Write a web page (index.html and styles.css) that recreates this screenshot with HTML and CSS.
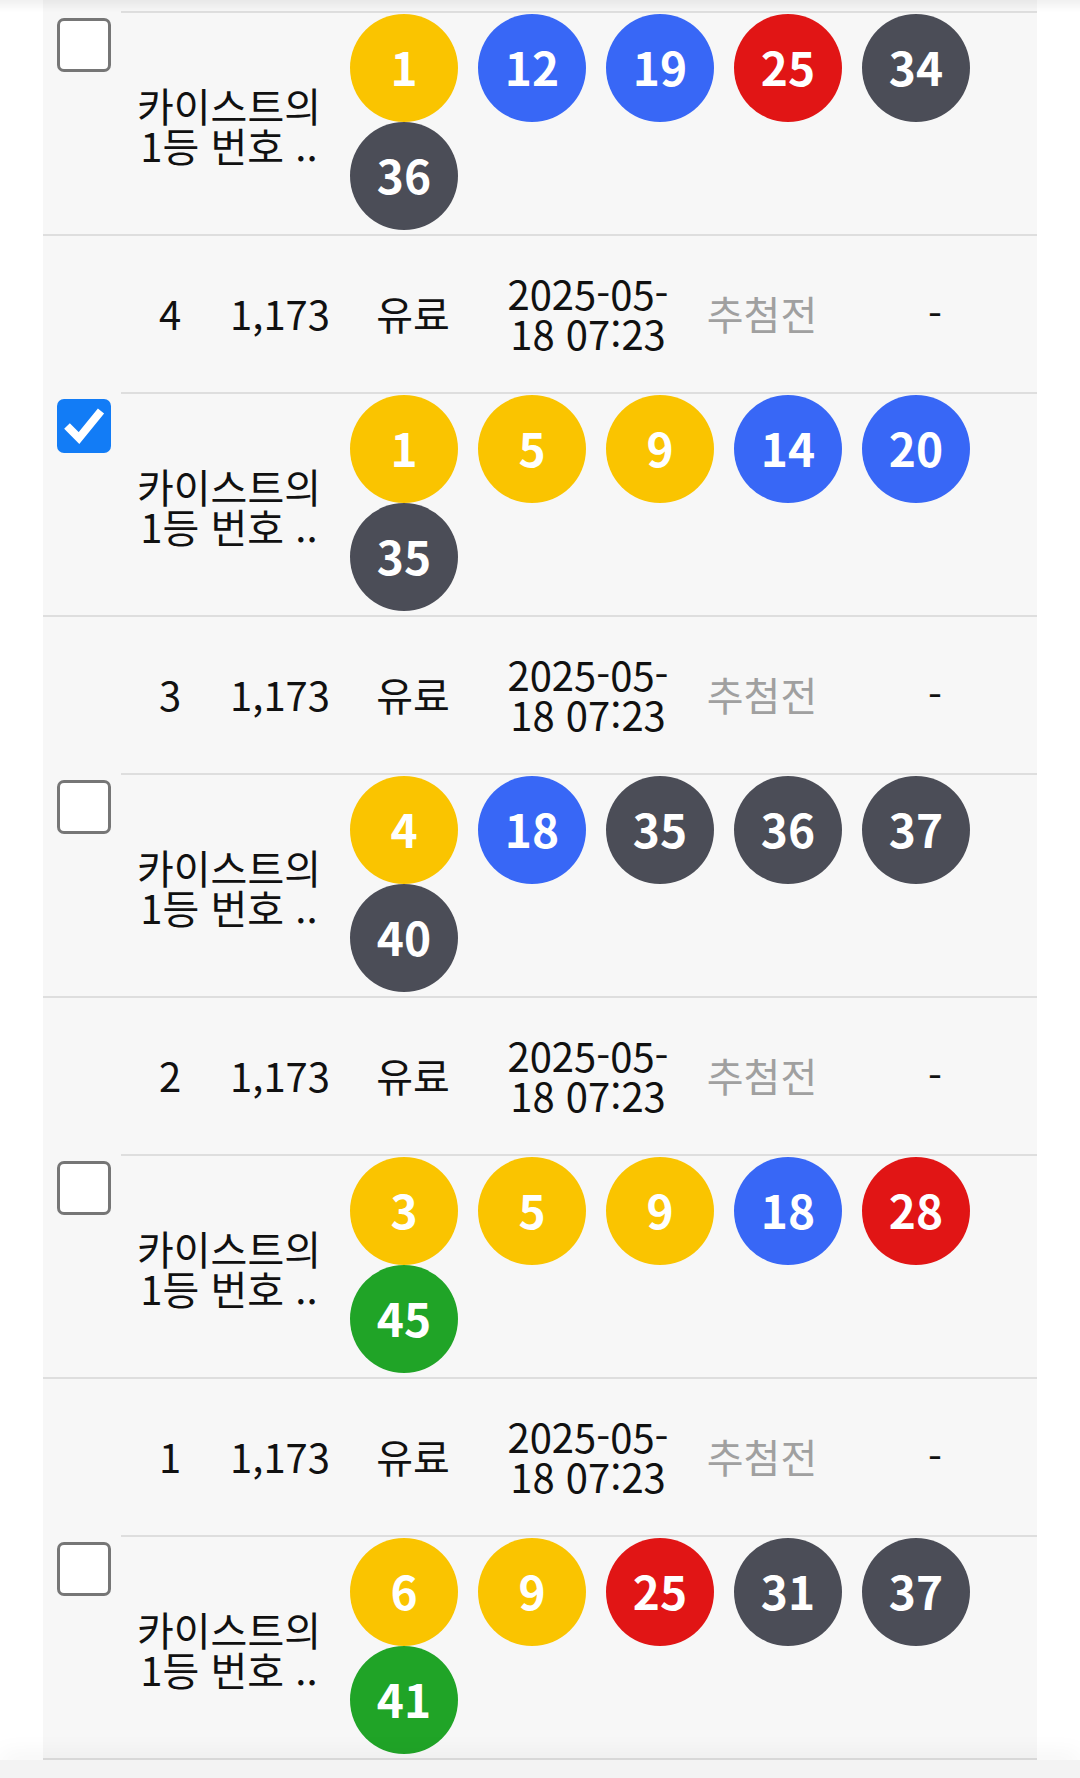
FILE: index.html
```html
<!DOCTYPE html>
<html lang="ko">
<head>
<meta charset="utf-8">
<title>내 번호</title>
<link rel="stylesheet" href="styles.css">
</head>
<body>
<div class="top-shade"></div>
<div class="panel">
  <div class="entry">
    <div class="check-cell"><span class="box"></span></div>
    <div class="data-row">
      <span>5</span><span>1,173</span><span>유료</span><span class="date">2025-05-<br>18 07:23</span><span class="muted">추첨전</span><span>-</span>
    </div>
    <div class="balls-row">
      <div class="label">카이스트의<br>1등 번호 ..</div>
      <div class="balls">
        <span class="ball y">1</span><span class="ball b">12</span><span class="ball b">19</span><span class="ball r">25</span><span class="ball g">34</span><span class="ball g">36</span>
      </div>
    </div>
  </div>
  <div class="entry">
    <div class="check-cell"><span class="box checked"><svg viewBox="0 0 54 54" width="54" height="54"><polyline points="10,27 22,39 44,12" fill="none" stroke="#fff" stroke-width="8"/></svg></span></div>
    <div class="data-row">
      <span>4</span><span>1,173</span><span>유료</span><span class="date">2025-05-<br>18 07:23</span><span class="muted">추첨전</span><span>-</span>
    </div>
    <div class="balls-row">
      <div class="label">카이스트의<br>1등 번호 ..</div>
      <div class="balls">
        <span class="ball y">1</span><span class="ball y">5</span><span class="ball y">9</span><span class="ball b">14</span><span class="ball b">20</span><span class="ball g">35</span>
      </div>
    </div>
  </div>
  <div class="entry">
    <div class="check-cell"><span class="box"></span></div>
    <div class="data-row">
      <span>3</span><span>1,173</span><span>유료</span><span class="date">2025-05-<br>18 07:23</span><span class="muted">추첨전</span><span>-</span>
    </div>
    <div class="balls-row">
      <div class="label">카이스트의<br>1등 번호 ..</div>
      <div class="balls">
        <span class="ball y">4</span><span class="ball b">18</span><span class="ball g">35</span><span class="ball g">36</span><span class="ball g">37</span><span class="ball g">40</span>
      </div>
    </div>
  </div>
  <div class="entry">
    <div class="check-cell"><span class="box"></span></div>
    <div class="data-row">
      <span>2</span><span>1,173</span><span>유료</span><span class="date">2025-05-<br>18 07:23</span><span class="muted">추첨전</span><span>-</span>
    </div>
    <div class="balls-row">
      <div class="label">카이스트의<br>1등 번호 ..</div>
      <div class="balls">
        <span class="ball y">3</span><span class="ball y">5</span><span class="ball y">9</span><span class="ball b">18</span><span class="ball r">28</span><span class="ball gr">45</span>
      </div>
    </div>
  </div>
  <div class="entry">
    <div class="check-cell"><span class="box"></span></div>
    <div class="data-row">
      <span>1</span><span>1,173</span><span>유료</span><span class="date">2025-05-<br>18 07:23</span><span class="muted">추첨전</span><span>-</span>
    </div>
    <div class="balls-row">
      <div class="label">카이스트의<br>1등 번호 ..</div>
      <div class="balls">
        <span class="ball y">6</span><span class="ball y">9</span><span class="ball r">25</span><span class="ball g">31</span><span class="ball g">37</span><span class="ball gr">41</span>
      </div>
    </div>
  </div>
</div>
<div class="bottom-shade"></div>
</body>
</html>
```

FILE: styles.css
```css
html, body {
  margin: 0;
  padding: 0;
}
body {
  background: #ffffff;
  font-family: "Noto Sans CJK KR", "Noto Sans", sans-serif;
  color: #111;
  overflow: hidden;
  height: 1778px;
}
.panel {
  margin: -145px 43px 0 43px;
  width: 994px;
  background: #f7f7f7;
}
.entry {
  display: grid;
  grid-template-columns: 78px 1fr;
  grid-template-rows: 158px 221px;
  border-bottom: 2px solid #dedede;
}
.check-cell {
  grid-row: 1 / 3;
  grid-column: 1;
  display: flex;
  align-items: center;
  padding-left: 14px;
}
.box {
  width: 54px;
  height: 54px;
  box-sizing: border-box;
  border: 3px solid #767676;
  border-radius: 7px;
  background: #fff;
  display: block;
}
.box.checked {
  border: none;
  background: #127cf6;
}
.box svg {
  display: block;
}
.data-row {
  grid-column: 2;
  grid-row: 1;
  box-sizing: border-box;
  border-bottom: 2px solid #dedede;
  display: grid;
  grid-template-columns: 98px 122px 144px 206px 142px 1fr;
  align-items: center;
  text-align: center;
  font-size: 40px;
  line-height: 46px;
  padding-bottom: 2px;
}
.date {
  line-height: 40px;
}
.muted {
  color: #a0a0a0;
}
.balls-row {
  grid-column: 2;
  grid-row: 2;
  display: flex;
  align-items: stretch;
}
.label {
  width: 216px;
  flex: none;
  align-self: center;
  text-align: center;
  font-size: 40px;
  line-height: 40px;
  padding-top: 2px;
}
.balls {
  display: flex;
  flex-wrap: wrap;
  align-content: flex-start;
  column-gap: 20px;
  padding: 1px 0 0 13px;
  flex: 1;
}
.ball {
  width: 108px;
  height: 108px;
  box-sizing: border-box;
  border-radius: 50%;
  color: #fff;
  font-weight: 700;
  font-size: 46px;
  line-height: 104px;
  padding-bottom: 4px;
  text-align: center;
  display: block;
}
.ball.y { background: #fac400; }
.ball.b { background: #3867f6; }
.ball.r { background: #e11515; }
.ball.g { background: #4b4d57; }
.ball.gr { background: #20a427; }
.top-shade {
  position: fixed;
  top: 0;
  left: 0;
  right: 0;
  height: 12px;
  background: linear-gradient(to bottom, rgba(0,0,0,0.06), rgba(0,0,0,0));
  z-index: 2;
}
.bottom-shade {
  position: fixed;
  left: 0;
  right: 0;
  bottom: 0;
  height: 18px;
  background: #f3f3f3;
  box-shadow: 0 -6px 24px rgba(0,0,0,0.05);
  z-index: 2;
}
```
